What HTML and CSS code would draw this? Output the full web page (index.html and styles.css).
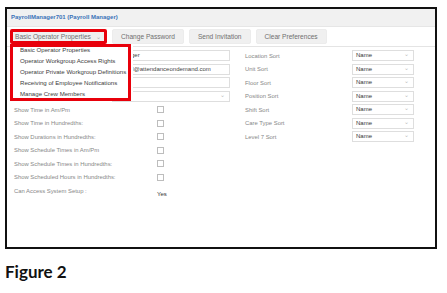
FILE: index.html
```html
<!DOCTYPE html>
<html lang="en">
<head>
    <meta charset="UTF-8">
    <title>Operator Properties</title>
    <link rel="stylesheet" href="styles.css">
</head>
<body>
    <div class="frame">
        <div class="header">PayrollManager701 (Payroll Manager)</div>

        <div class="toolbar">
            <button class="btn btn-active">Basic Operator Properties <span class="chev">&#8964;</span></button>
            <button class="btn">Change Password</button>
            <button class="btn">Send Invitation</button>
            <button class="btn">Clear Preferences</button>
        </div>

        <div class="form">
            <div class="col col-left">
                <!-- labels of the first rows sit under the open menu -->
                <label></label>
                <div class="field"><span class="input">Manager</span></div>
                <label></label>
                <div class="field"><span class="input">payroll@attendanceondemand.com</span></div>
                <label></label>
                <div class="field"><span class="input"></span></div>
                <label></label>
                <div class="field"><span class="input select"><span class="chev">&#8964;</span></span></div>

                <label>Show Time in Am/Pm</label>
                <div class="field"><span class="check"></span></div>
                <label>Show Time in Hundredths:</label>
                <div class="field"><span class="check"></span></div>
                <label>Show Durations in Hundredths:</label>
                <div class="field"><span class="check"></span></div>
                <label>Show Schedule Times in Am/Pm</label>
                <div class="field"><span class="check"></span></div>
                <label>Show Schedule Times in Hundredths:</label>
                <div class="field"><span class="check"></span></div>
                <label>Show Scheduled Hours in Hundredths:</label>
                <div class="field"><span class="check"></span></div>
                <label>Can Access System Setup :</label>
                <div class="field"><span class="yes">Yes</span></div>
            </div>

            <div class="col col-right">
                <label>Location Sort</label>
                <div class="field"><span class="input select">Name<span class="chev">&#8964;</span></span></div>
                <label>Unit Sort</label>
                <div class="field"><span class="input select">Name<span class="chev">&#8964;</span></span></div>
                <label>Floor Sort</label>
                <div class="field"><span class="input select">Name<span class="chev">&#8964;</span></span></div>
                <label>Position Sort</label>
                <div class="field"><span class="input select">Name<span class="chev">&#8964;</span></span></div>
                <label>Shift Sort</label>
                <div class="field"><span class="input select">Name<span class="chev">&#8964;</span></span></div>
                <label>Care Type Sort</label>
                <div class="field"><span class="input select">Name<span class="chev">&#8964;</span></span></div>
                <label>Level 7 Sort</label>
                <div class="field"><span class="input select">Name<span class="chev">&#8964;</span></span></div>
            </div>
        </div>

        <!-- open menu of the first button -->
        <ul class="menu">
            <li>Basic Operator Properties</li>
            <li>Operator Workgroup Access Rights</li>
            <li>Operator Private Workgroup Definitions</li>
            <li>Receiving of Employee Notifications</li>
            <li>Manage Crew Members</li>
        </ul>
    </div>

    <div class="caption">Figure 2</div>
</body>
</html>
```

FILE: styles.css
```css
body {
    margin: 0;
    font-family: 'Liberation Sans', Arial, sans-serif;
    background: #fff;
}

/* Outer black frame of the screenshot */
.frame {
    position: relative;
    box-sizing: border-box;
    width: 432px;
    height: 242px;
    margin: 7px 0 0 5px;
    border: 2px solid #111;
    background: #fff;
    overflow: hidden;
}

.header {
    height: 17px;
    line-height: 17px;
    padding-left: 4px;
    background: #f1f1f1;
    border-bottom: 1px solid #e6e6e6;
    font-size: 6px;
    font-weight: bold;
    color: #3a72b8;
}

.toolbar {
    display: flex;
    gap: 5px;
    padding: 2px 0 2px 3px;
    border-bottom: 1px solid #e4e4e4;
}

.btn {
    height: 15px;
    padding: 0 8px;
    border: 1px solid #ececec;
    border-radius: 2px;
    background: #f0f0f0;
    font-family: inherit;
    font-size: 6.6px;
    color: #6f6f6f;
    white-space: nowrap;
}

.btn-active {
    border: 3px solid #e8000b;
    padding: 0 5px 0 2px;
    width: 97px;
    text-align: left;
}

.btn .chev {
    margin-left: 3px;
    color: #aaa;
    font-size: 6px;
}

/* Form */
.form {
    display: flex;
    padding: 2px 0 0 7px;
}

.col {
    display: grid;
    grid-auto-rows: 13.5px;
    align-items: center;
}

.col-left {
    grid-template-columns: 98px 118px;
}

.col-right {
    margin-left: 15px;
    grid-template-columns: 107px 62px;
}

.col label {
    font-size: 5.9px;
    color: #888;
    white-space: nowrap;
}

.input {
    position: relative;
    display: block;
    box-sizing: border-box;
    height: 11px;
    line-height: 9px;
    padding: 0 3px;
    border: 1px solid #dedede;
    font-size: 6px;
    color: #444;
    white-space: nowrap;
    overflow: hidden;
}

.select {
    color: #333;
}

.select .chev {
    position: absolute;
    right: 4px;
    top: -1px;
    font-size: 6px;
    color: #bbb;
}

.check {
    display: block;
    width: 5px;
    height: 5px;
    margin-left: 45px;
    border: 1px solid #bdbdbd;
}

.yes {
    margin-left: 45px;
    font-size: 6px;
    color: #333;
}

/* Dropdown menu opened from the first button */
.menu {
    position: absolute;
    left: 3px;
    top: 35px;
    box-sizing: border-box;
    width: 121px;
    height: 57px;
    margin: 0;
    padding: 0 0 0 7px;
    list-style: none;
    background: #fff;
    border: 3px solid #e8000b;
    box-shadow: 2px 0 0 #fff;
    overflow: hidden;
}

.menu li {
    height: 11px;
    line-height: 11px;
    font-size: 6.1px;
    color: #3c3c3c;
    white-space: nowrap;
}

.menu li:first-child {
    margin-top: -3.5px;
}

.caption {
    margin: 13px 0 0 5px;
    font-family: Lato, 'Liberation Sans', sans-serif;
    font-size: 17px;
    font-weight: bold;
    line-height: 20px;
    color: #111;
}
```
